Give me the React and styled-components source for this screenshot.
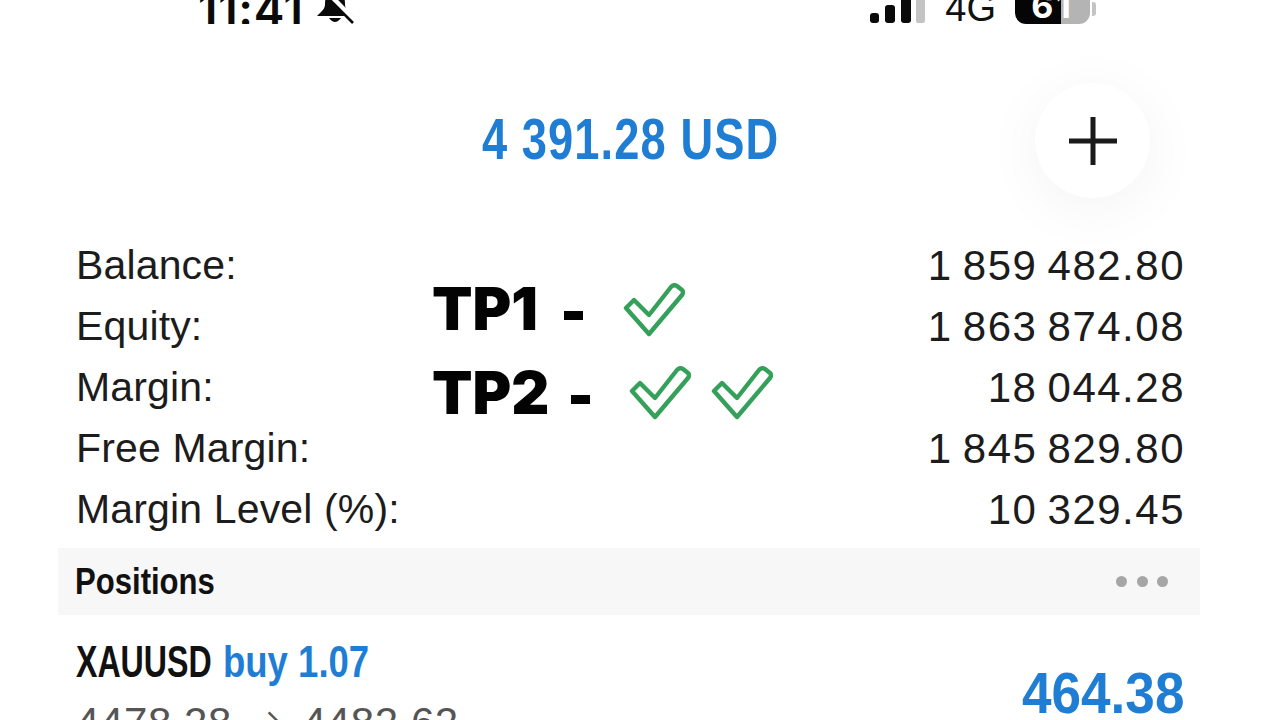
import React from "react";
import styled, { createGlobalStyle } from "styled-components";

const Global = createGlobalStyle`
  html, body { margin: 0; padding: 0; background: #fff; }
  body { font-family: "Liberation Sans", Arial, sans-serif; }
`;
const Page = styled.div`
  position: relative; width: 1280px; height: 720px; overflow: hidden; background: #fff; color: #1c1c1c;
`;
const StatusBar = styled.div`
  height: 24px; display: flex; justify-content: space-between; align-items: flex-end;
  padding: 0 184px 0 198px; overflow: hidden;
`;
const StatusGroup = styled.div`
  display: flex; align-items: flex-end; gap: ${p => p.$gap || 0}px;
`;
const Time = styled.span`
  font: 600 46px/46px Inter, sans-serif; color: #0a0a0a; margin-bottom: -8px; letter-spacing: 0.7px;
`;
const NetLabel = styled.span`
  font: 400 38px/38px "Liberation Sans", sans-serif; color: #111; margin-bottom: -3px;
`;
const BatteryBox = styled.div`
  width: 75px; height: 34px; border-radius: 0 0 11px 11px;
  overflow: hidden; background: linear-gradient(90deg, #050505 0 61%, #b4b4b4 61% 100%);
  font: 700 34px/34px Inter, sans-serif; color: #fff; letter-spacing: 3px;
  display: flex; align-items: flex-end; justify-content: center; padding-bottom: 1px; box-sizing: border-box;
`;
const BatteryCap = styled.div`
  width: 4px; height: 14px; margin: 0 0 8px 2px; background: #c4c4c4; border-radius: 0 3px 3px 0;
`;
const Header = styled.div`
  height: 207px; padding-top: 23px; box-sizing: border-box; display: flex; align-items: center; justify-content: center;
`;
const Title = styled.div`
  font: 700 58px/60px "Liberation Sans", sans-serif; color: #1f7ed4; white-space: nowrap; letter-spacing: 1.4px;
  transform: scaleX(.78); margin-left: -19px;
`;
const AddButton = styled.div`
  position: absolute; left: 1035px; top: 83px; width: 115px; height: 115px; border-radius: 50%;
  background: #fff; box-shadow: 0 10px 60px rgba(0,0,0,.05);
  display: flex; align-items: center; justify-content: center;
`;
const Summary = styled.div`
  padding: 4px 96px 0 76px;
`;
const Row = styled.div`
  display: flex; justify-content: space-between; height: 61px; align-items: center; font-size: 41px; color: #1c1c1c;
  line-height: 61px; letter-spacing: .15px;
`;
const Value = styled.span`
  font-size: 42px; letter-spacing: 1.5px; word-spacing: -3px; margin-right: -1px;
`;
const SectionBar = styled.div`
  margin: 8px 80px 0 58px; height: 67px; background: #f7f7f7; display: flex; justify-content: space-between; align-items: center;
  padding: 0 32px 0 17px;
`;
const SectionTitle = styled.div`
  font: 700 37px/40px "Liberation Sans", sans-serif; color: #111; transform: scaleX(.84); transform-origin: left;
`;
const Dots = styled.div`
  display: flex; gap: 9.5px;
`;
const Dot = styled.i`
  width: 11px; height: 11px; border-radius: 50%; background: #a6a6a6; display: block;
`;
const Position = styled.div`
  display: flex; justify-content: space-between; padding: 22px 96px 0 76px;
`;
const SymbolLine = styled.div`
  display: flex; gap: 11px; font: 700 44px/50px "Liberation Sans", sans-serif; white-space: nowrap;
`;
const Ticker = styled.span`
  width: 136px; color: #111; transform: scaleX(.73); transform-origin: left;
`;
const Side = styled.span`
  width: 146px; color: #1f7ed4; transform: scaleX(.83); transform-origin: left;
`;
const Prices = styled.div`
  font-size: 42px; color: #555; line-height: 50px; margin-top: 11px; display: flex; gap: 16px; letter-spacing: .6px;
`;
const Arrow = styled.span`
  font: 300 40px/50px Inter, sans-serif;
`;
const Profit = styled.div`
  font: 700 58px/60px "Liberation Sans", sans-serif; color: #1f7ed4; margin-top: 26px;
  transform: scaleX(.915); transform-origin: right;
`;
const Stamp = styled.div`
  position: absolute; left: ${p => p.$x}px; top: ${p => p.$y}px; display: flex; align-items: center;
  font: 900 59px/60px Inter, sans-serif; color: #030303;
`;
const Dash = styled.i`
  position: absolute; left: ${p => p.$x}px; top: ${p => p.$y}px; width: 19px; height: 9px; background: #030303;
`;
const CheckSvg = styled.svg`
  position: absolute; left: ${p => p.$x}px; top: ${p => p.$y}px;
`;

const Check = ({ x, y }) => (
  <CheckSvg $x={x} $y={y} width="62" height="54" viewBox="0 0 62 54" fill="none">
    <path d="M3 25 L11 17 L26 32 L48 4 Q51 1 54 3 L59 7 Q61 9 59 12 L26 51 Z" stroke="#34a05a" strokeWidth="4.4" strokeLinejoin="round" />
  </CheckSvg>
);

const Bars = () => (
  <svg width="57" height="24" viewBox="0 0 57 24">
    <rect x="1" y="13" width="9" height="10" rx="3" fill="#0a0a0a" />
    <rect x="16" y="5" width="10" height="18" rx="3" fill="#0a0a0a" />
    <rect x="32" y="-4" width="10" height="27" rx="3" fill="#0a0a0a" />
    <rect x="47" y="-8" width="9" height="31" rx="2" fill="#c4c4c4" />
  </svg>
);

const MutedBell = () => (
  <svg width="38" height="26" viewBox="0 0 38 26">
    <path d="M19 -8 C11 -8 9 0 9 6 C9 11 6 13 1 18 L37 18 C31 13 29 11 29 6 C29 0 27 -8 19 -8Z" fill="#0a0a0a" />
    <path d="M13 20 Q19 28 25 20Z" fill="#0a0a0a" />
    <path d="M9 -8 L38 22" stroke="#fff" strokeWidth="5" />
    <path d="M5 -7 L37 25" stroke="#0a0a0a" strokeWidth="2.6" />
  </svg>
);

const Plus = () => (
  <svg width="48" height="48" viewBox="0 0 48 48">
    <path d="M24 0V48M0 24H48" stroke="#1a1a1a" strokeWidth="5" />
  </svg>
);

const rows = [
  ["Balance:", "1 859 482.80"],
  ["Equity:", "1 863 874.08"],
  ["Margin:", "18 044.28"],
  ["Free Margin:", "1 845 829.80"],
  ["Margin Level (%):", "10 329.45"],
];

export default function App() {
  return (
    <Page>
      <Global />
      <StatusBar>
        <StatusGroup $gap={12}>
          <Time>11:41</Time>
          <MutedBell />
        </StatusGroup>
        <StatusGroup $gap={19}>
          <Bars />
          <NetLabel>4G</NetLabel>
          <StatusGroup>
            <BatteryBox>61</BatteryBox>
            <BatteryCap />
          </StatusGroup>
        </StatusGroup>
      </StatusBar>
      <Header>
        <Title>4 391.28 USD</Title>
      </Header>
      <AddButton><Plus /></AddButton>
      <Summary>
        {rows.map(([label, value]) => (
          <Row key={label}><span>{label}</span><Value>{value}</Value></Row>
        ))}
      </Summary>
      <SectionBar>
        <SectionTitle>Positions</SectionTitle>
        <Dots><Dot /><Dot /><Dot /></Dots>
      </SectionBar>
      <Position>
        <div>
          <SymbolLine><Ticker>XAUUSD</Ticker><Side>buy 1.07</Side></SymbolLine>
          <Prices><span>4478.28</span><Arrow>→</Arrow><span>4482.62</span></Prices>
        </div>
        <Profit>464.38</Profit>
      </Position>
      <Stamp $x={432} $y={279}>TP1</Stamp>
      <Dash $x={564} $y={311} />
      <Stamp $x={432} $y={363}>TP2</Stamp>
      <Dash $x={571} $y={395} />
      <Check x={623} y={283} />
      <Check x={629} y={366} />
      <Check x={711} y={366} />
    </Page>
  );
}
